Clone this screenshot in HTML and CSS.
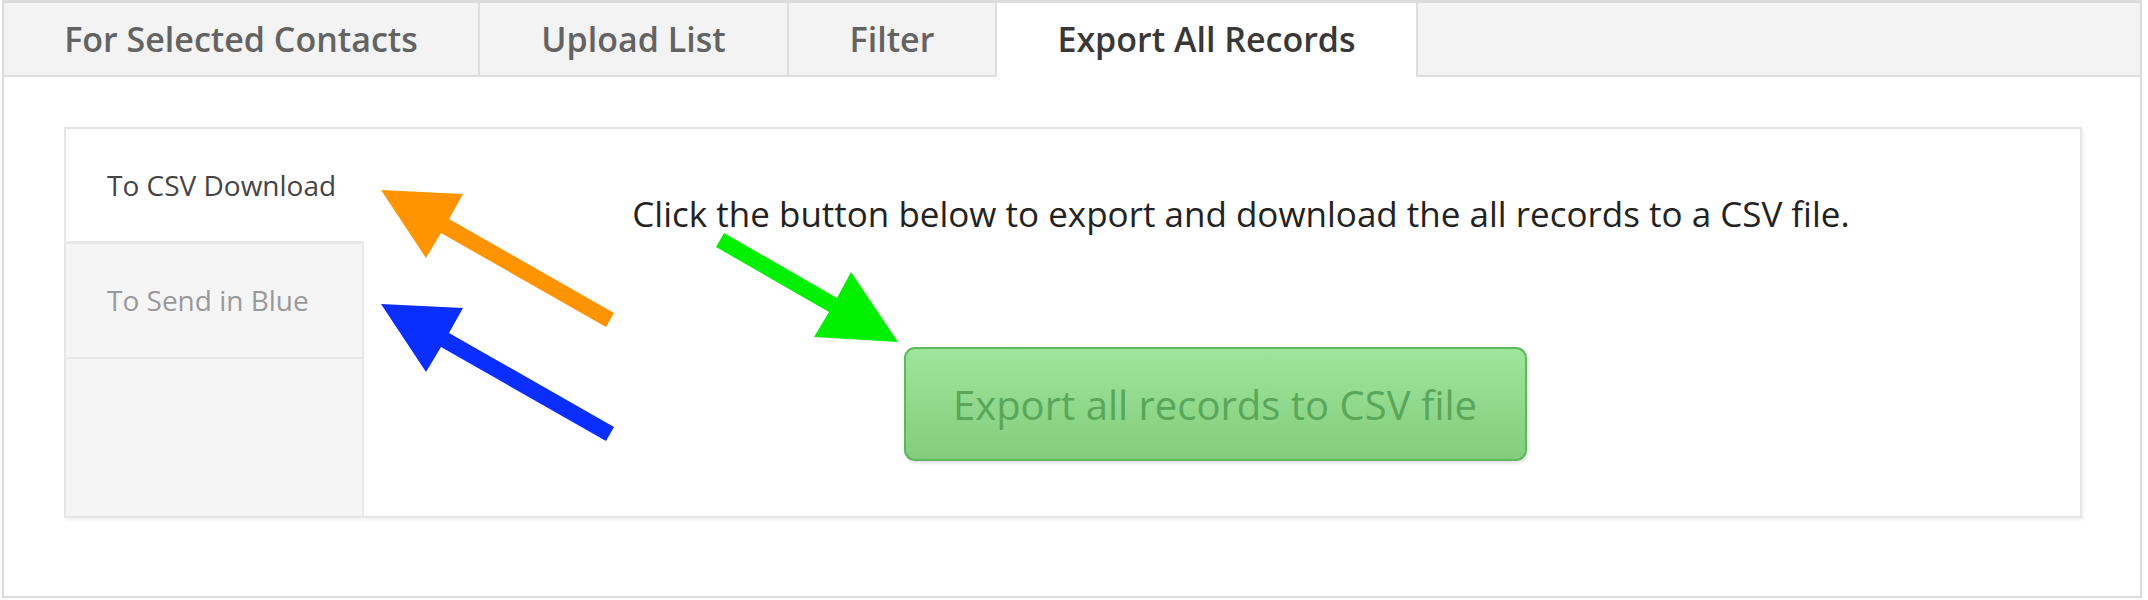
FILE: index.html
```html
<!DOCTYPE html>
<html lang="en">
  <head>
    <meta charset="UTF-8" />
    <meta name="viewport" content="width=device-width, initial-scale=1.0" />
    <title>Export All Records</title>
    <link rel="stylesheet" href="styles.css">
  </head>
  <body>
    <div class="frame">
      <div class="tabs">
        <div class="tab tab-1">For Selected Contacts</div>
        <div class="tab tab-2">Upload List</div>
        <div class="tab tab-3">Filter</div>
        <div class="tab tab-4 active">Export All Records</div>
        <div class="tab-fill"></div>
      </div>
      <div class="panel">
        <div class="box">
          <div class="side">
            <div class="side-item active">To CSV Download</div>
            <div class="side-item">To Send in Blue</div>
            <div class="side-rest"></div>
          </div>
          <div class="pane">
            <p class="hint">Click the button below to export and download the all records to a CSV file.</p>
            <button class="export-btn">Export all records to CSV file</button>
          </div>
        </div>
      </div>
    </div>

    <svg class="arrows" width="2148" height="600" viewBox="0 0 2148 600">
      <polygon fill="#ff9400" points="381,190 463,194 449,219 614,313 606,327 441,233 426,258" />
      <polygon fill="#0a2eff" points="381,304 463,308 449,333 614,427 606,441 441,347 426,372" />
      <polygon fill="#00f000" points="898,342 851,272 837,298 724,233 716,247 829,312 814,337" />
    </svg>
  </body>
</html>
```

FILE: styles.css
```css
body {
  margin: 0;
  font-family: "Open Sans", "Liberation Sans", sans-serif;
  background: #fff;
}
.frame {
  box-sizing: border-box;
  margin-left: 2px;
  width: 2140px;
  height: 598px;
  border: 2px solid #dcdcdc;
  border-top-width: 3px;
}
.tabs {
  display: flex;
  height: 72px;
  background: #f3f3f3;
  border-bottom: 2px solid #dedede;
}
.tab {
  box-sizing: border-box;
  height: 72px;
  border-right: 2px solid #dedede;
  font-size: 34px;
  font-weight: 600;
  color: #636363;
  line-height: 72px;
  text-align: center;
}
.tab-1 { width: 476px; }
.tab-2 { width: 309px; }
.tab-3 { width: 208px; }
.tab-4 { width: 421px; }
.tab.active {
  height: 74px;
  background: #fff;
  color: #383838;
}
.tab-fill {
  flex: 1;
}
.panel {
  padding: 50px 58px 0 60px;
}
.box {
  display: flex;
  height: 391px;
  box-sizing: border-box;
  border: 2px solid #e6e6e6;
  box-shadow: 2px 2px 3px rgba(0, 0, 0, 0.06);
}
.side {
  display: flex;
  flex-direction: column;
  width: 298px;
}
.side-item {
  box-sizing: border-box;
  height: 115px;
  padding-left: 41px;
  font-size: 28px;
  line-height: 112px;
  color: #999;
  background: #f5f5f5;
  border-right: 2px solid #e8e8e8;
  border-bottom: 2px solid #e8e8e8;
}
.side-item.active {
  height: 115px;
  color: #444;
  background: #fff;
  border-right: none;
  border-bottom: 3px solid #e8e8e8;
}
.side-rest {
  flex: 1;
  background: #f5f5f5;
  border-right: 2px solid #e8e8e8;
}
.pane {
  flex: 1;
  text-align: center;
}
.hint {
  margin: 63px 0 0 38px;
  font-size: 35px;
  line-height: 44px;
  color: #222;
}
.export-btn {
  margin: 111px 14px 0 0;
  width: 623px;
  height: 114px;
  font-family: "Open Sans", "Liberation Sans", sans-serif;
  font-size: 40px;
  color: #5aa65a;
  background: linear-gradient(#9ee59b, #83cd7d);
  border: 2px solid #5cb85c;
  border-radius: 11px;
  box-shadow: 1px 2px 3px rgba(0, 0, 0, 0.12);
}
.arrows {
  position: absolute;
  top: 0;
  left: 0;
  pointer-events: none;
}
```
